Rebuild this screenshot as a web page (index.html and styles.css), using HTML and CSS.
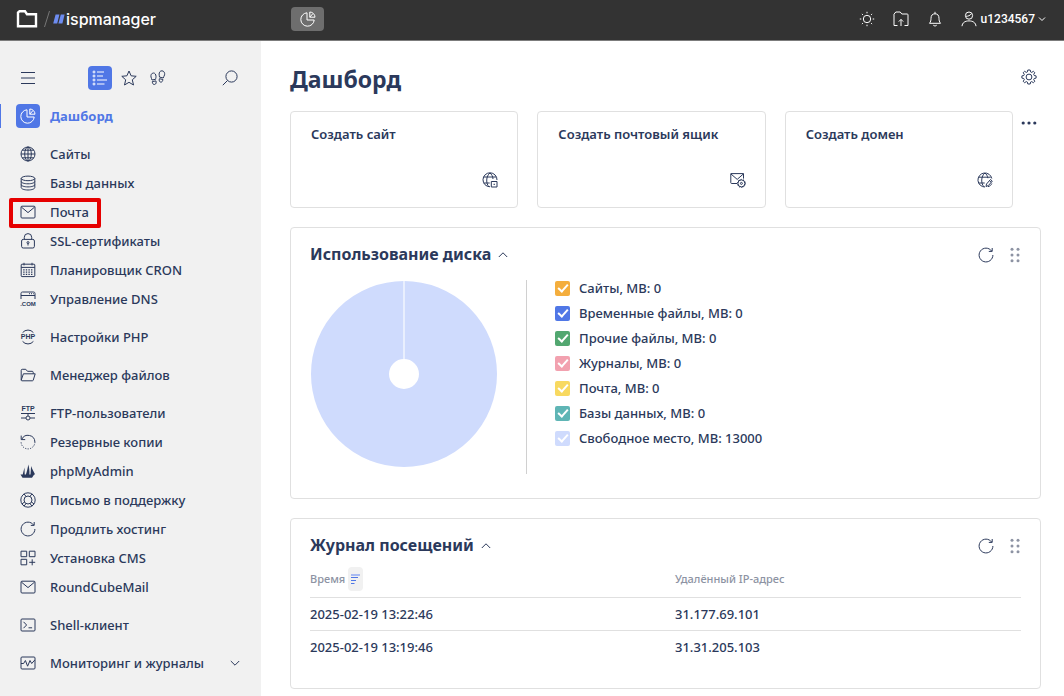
FILE: index.html
```html
<!DOCTYPE html>
<html lang="ru">
<head>
<meta charset="utf-8">
<title>Дашборд — ispmanager</title>
<meta name="viewport" content="width=device-width, initial-scale=1">
<link rel="stylesheet" href="styles.css">
</head>
<body>
<svg class="sprite" aria-hidden="true">
  <symbol id="pie" viewBox="0 0 16 16"><path d="M7 1.8A6.7 6.7 0 1 0 14.2 9H7zM9.800 1v5.200H15A5.300 5.300 0 0 0 9.800 1zM9.800 6.200l3-3.500"/></symbol>
  <symbol id="globe" viewBox="0 0 16 16"><circle cx="8" cy="8" r="7"/><ellipse cx="8" cy="8" rx="3.3" ry="7"/><path d="M1 8h14M8 1v14M2.2 4.2h11.6M2.2 11.8h11.6"/></symbol>
  <symbol id="db" viewBox="0 0 16 16"><ellipse cx="8" cy="3.4" rx="6.8" ry="2.3"/><path d="M1.2 3.4v9.2c0 1.3 3 2.4 6.8 2.4s6.8-1.1 6.8-2.4V3.4M1.2 6.5c0 1.3 3 2.3 6.8 2.3s6.8-1 6.8-2.3M1.2 9.6c0 1.3 3 2.3 6.8 2.3s6.8-1 6.8-2.3"/></symbol>
  <symbol id="mail" viewBox="0 0 16 16"><rect x="1" y="2.2" width="14" height="11.8" rx="1"/><path d="M1.3 3l6.7 5.6L14.7 3"/></symbol>
  <symbol id="lock" viewBox="0 0 16 16"><rect x="1.6" y="6.4" width="12.8" height="8.6" rx="1.6"/><path d="M4.3 6.2V4.3a3.7 3.7 0 0 1 7.4 0v1.9M8 10.5v2"/><circle cx="8" cy="9.6" r="1"/></symbol>
  <symbol id="calendar" viewBox="0 0 16 16"><rect x="1.2" y="2.2" width="13.6" height="12.4" rx=".8"/><path d="M1.2 5.4h13.6M4 .8v2.6M12 .8v2.6"/><path stroke-dasharray="1.4 1.2" stroke-width="1.3" d="M3.2 7.8h10M3.2 10.1h10M3.2 12.4h10"/></symbol>
  <symbol id="folder" viewBox="0 0 16 16"><path d="M1.200 13V3.300c0-.6.4-1 1-1h3.600l1.700 2h4.700c.6 0 1 .4 1 1v1.500M1.200 13.200l2.200-6.400h11.800l-2 6.500c-.1.300-.4.500-.8.500H2c-.5 0-.8-.2-.8-.6z"/></symbol>
  <symbol id="backup" viewBox="0 0 16 16"><path d="M1.800 5.200A6.900 6.900 0 0 1 14.900 8M1.200 1.600v4h4"/><path stroke-dasharray="1.200 1.300" d="M14.900 8A6.900 6.900 0 0 1 1.100 8"/></symbol>
  <symbol id="sails" viewBox="0 0 16 16"><path class="solid" d="M.5 11.500h2.200L4.500 4.500 4.700 11.500h1.200C7 8 8 4.500 8.200 1.500c1 3 1.500 6.500 1.200 10h1.100l.6-8.500c1 3 2.600 5.600 3.900 8.300l-1 .5-2 2.900H2.500z"/></symbol>
  <symbol id="lifebuoy" viewBox="0 0 16 16"><circle cx="8" cy="8" r="7.200"/><circle cx="8" cy="8" r="4"/><path d="M4 1.800l2 2.600M12 1.800l-2 2.600M1.900 12l2.600-2M14.100 12l-2.600-2M4 14.200l2-2.600M12 14.200l-2-2.600"/></symbol>
  <symbol id="reload" viewBox="0 0 16 16"><path d="M13.600 4A6.900 6.900 0 1 0 14.900 8M14.200 1v3.400h-3.400"/></symbol>
  <symbol id="apps" viewBox="0 0 16 16"><path d="M1 1.200h5.700v5.500H1zM9.300 1.200H15v5.500H9.300zM1 9.300h5.700v5.500H1zM12.200 9.300v6M9.200 12.300h6"/></symbol>
  <symbol id="shell" viewBox="0 0 16 16"><rect x="1" y="2" width="14" height="12" rx="1"/><path d="M3.500 4.800L6.600 8l-3.100 3.200M8.500 10.800h3.600"/></symbol>
  <symbol id="monitor" viewBox="0 0 16 16"><rect x="1" y="2" width="14" height="12" rx="1"/><path d="M1 8.500h2.600l1.800-3 2.200 5.700L10 5.500l1.700 3L14.800 5"/></symbol>
  <symbol id="chevron" viewBox="0 0 16 16"><path d="M3.800 6L8 10.200 12.200 6"/></symbol>
  <symbol id="chevron-up" viewBox="0 0 16 16"><path d="M3.800 10L8 5.800l4.200 4.200"/></symbol>
</svg>

<header class="topbar">
  <a class="logo" href="#" aria-label="ispmanager">
    <svg class="logo-folder" viewBox="0 0 22 20" aria-hidden="true"><path d="M2 3.500V17.300H20V5.200H11L9 2.300H3.500z"/></svg>
    <svg class="logo-slash" viewBox="0 0 8 20" aria-hidden="true"><path d="M1.500 18L6.500 2"/></svg>
    <svg class="logo-mark" viewBox="0 0 12 10" aria-hidden="true"><path d="M2.600.500h3.800L4.200 9.500H.200zM7.800.500h3.800L9.400 9.500h-4z"/></svg>
    <span class="logo-name">ispmanager</span>
  </a>
  <button class="tab" type="button" aria-label="Дашборд"><svg class="icon"><use href="#pie"/></svg></button>
  <div class="tools">
    <button class="tool" type="button" aria-label="Тема"><svg class="icon" viewBox="0 0 16 16"><circle cx="8" cy="8" r="3.700"/><path d="M8 .8v1.500M8 13.700v1.500M.8 8h1.500M13.700 8h1.500M2.900 2.900l1 1M12.100 12.100l1 1M2.900 13.100l1-1M12.100 3.900l1-1"/></svg></button>
    <button class="tool" type="button" aria-label="Загрузка"><svg class="icon" viewBox="0 0 16 16"><path d="M4.500 14.500H1V3.200L2.800 1h4.400l1.600 2h5.400c.5 0 .8.300.8.800v10.700h-3.500M8 15V8.500M5.800 10.600L8 8.400l2.200 2.200"/></svg></button>
    <button class="tool" type="button" aria-label="Уведомления"><svg class="icon" viewBox="0 0 16 16"><path d="M2.500 12.300h11c-1.200-1.600-1.500-2.800-1.500-5C12 4.300 10.500 2.800 8 2.800S4 4.300 4 7.300c0 2.200-.3 3.400-1.500 5zM8 2.800V.8M6.300 14.200c.8 1 2.600 1 3.400 0"/></svg></button>
    <button class="tool user" type="button"><svg class="icon" viewBox="0 0 16 16"><circle cx="8" cy="4.600" r="3.600"/><path d="M1 15.200c.3-3.500 3-5.300 7-5.300s6.700 1.800 7 5.300M5 5.200c2 .2 4-.6 5.500-2.600"/></svg><span>u1234567</span><svg class="caret" viewBox="0 0 10 10"><path d="M2 3.500l3 3 3-3"/></svg></button>
  </div>
</header>

<div class="shell">
  <aside class="sidebar">
    <div class="modes">
      <button class="mode menu" type="button" aria-label="Меню"><svg class="icon" viewBox="0 0 16 16"><path d="M1 2.500h14M1 8h14M1 13.500h14"/></svg></button>
      <button class="mode on" type="button" aria-label="Список"><svg class="icon" viewBox="0 0 16 16"><path d="M5 2h7M5 6h6M5 10h10M5 14h7.500"/><circle cx="2" cy="2" r="1"/><circle cx="2" cy="6" r="1"/><circle cx="2" cy="10" r="1"/><circle cx="2" cy="14" r="1"/></svg></button>
      <button class="mode" type="button" aria-label="Избранное"><svg class="icon" viewBox="0 0 16 16"><path d="M8 1l2.100 4.800 5.100.5-3.900 3.500 1.200 5.200L8 12.300 3.500 15l1.200-5.200L.8 6.300l5.100-.5z"/></svg></button>
      <button class="mode" type="button" aria-label="История"><svg class="icon" viewBox="0 0 16 16"><path d="M3.500 3C1.500 3 .6 5 1 7c.3 1.300.8 2 1 3l3.600-.7c0-1 .5-1.500.4-3C5.900 4.500 5 3 3.500 3zM2.300 11.600l3.600-.7c.6 1.600.2 3.300-1.300 3.600s-2.200-1.200-2.300-2.900zM12 .8c-2 0-2.800 1.600-2.900 3.300 0 1.300.4 2 .4 3l3.700.9c.3-1.200 1-1.800 1.400-3.200C15 3 14 .9 12 .8zM9.400 8.700l3.500.8c-.2 1.700-1 2.900-2.300 2.600S8.900 10.400 9.400 8.700z"/></svg></button>
      <button class="mode search" type="button" aria-label="Поиск"><svg class="icon" viewBox="0 0 16 16"><circle cx="9.500" cy="6.500" r="5.600"/><path d="M5.500 10.500L.8 15.200"/></svg></button>
    </div>
    <nav class="nav" aria-label="Разделы">
      <ul class="group">
        <li><a class="link active" href="#"><span class="cell"><svg class="icon"><use href="#pie"/></svg></span>Дашборд</a></li>
      </ul>
      <ul class="group">
        <li><a class="link" href="#"><span class="cell"><svg class="icon"><use href="#globe"/></svg></span>Сайты</a></li>
        <li><a class="link" href="#"><span class="cell"><svg class="icon"><use href="#db"/></svg></span>Базы данных</a></li>
        <li><a class="link marked" href="#"><span class="cell"><svg class="icon"><use href="#mail"/></svg></span>Почта</a></li>
        <li><a class="link" href="#"><span class="cell"><svg class="icon"><use href="#lock"/></svg></span>SSL-сертификаты</a></li>
        <li><a class="link" href="#"><span class="cell"><svg class="icon"><use href="#calendar"/></svg></span>Планировщик CRON</a></li>
        <li><a class="link" href="#"><span class="cell"><svg class="icon" viewBox="0 0 16 16"><path d="M1 8V2.600C1 1.600 1.500 1 2.500 1h11c1 0 1.500.6 1.500 1.600V8M1 4.500h14M9 2.700h1M11 2.700h1M13 2.700h.8"/><text class="glyph" x="8" y="15" font-size="6" text-anchor="middle">.COM</text></svg></span>Управление DNS</a></li>
      </ul>
      <ul class="group">
        <li><a class="link" href="#"><span class="cell"><svg class="icon" viewBox="0 0 16 16"><path d="M2.600 3.600a7 7 0 0 1 10.800 0M2.600 12.400a7 7 0 0 0 10.800 0"/><text class="glyph" x="8" y="10.400" font-size="7" text-anchor="middle">PHP</text></svg></span>Настройки PHP</a></li>
      </ul>
      <ul class="group">
        <li><a class="link" href="#"><span class="cell"><svg class="icon"><use href="#folder"/></svg></span>Менеджер файлов</a></li>
      </ul>
      <ul class="group">
        <li><a class="link" href="#"><span class="cell"><svg class="icon" viewBox="0 0 16 16"><text class="glyph" x="8" y="5.600" font-size="7" text-anchor="middle">FTP</text><path d="M1 8.500h14M8 8.500v2.400M1 13h5M10 13h5"/><circle cx="8" cy="13" r="2"/></svg></span>FTP-пользователи</a></li>
        <li><a class="link" href="#"><span class="cell"><svg class="icon"><use href="#backup"/></svg></span>Резервные копии</a></li>
        <li><a class="link" href="#"><span class="cell"><svg class="icon"><use href="#sails"/></svg></span>phpMyAdmin</a></li>
        <li><a class="link" href="#"><span class="cell"><svg class="icon"><use href="#lifebuoy"/></svg></span>Письмо в поддержку</a></li>
        <li><a class="link" href="#"><span class="cell"><svg class="icon"><use href="#reload"/></svg></span>Продлить хостинг</a></li>
        <li><a class="link" href="#"><span class="cell"><svg class="icon"><use href="#apps"/></svg></span>Установка CMS</a></li>
        <li><a class="link" href="#"><span class="cell"><svg class="icon"><use href="#mail"/></svg></span>RoundCubeMail</a></li>
      </ul>
      <ul class="group">
        <li><a class="link" href="#"><span class="cell"><svg class="icon"><use href="#shell"/></svg></span>Shell-клиент</a></li>
      </ul>
      <ul class="group">
        <li><a class="link" href="#"><span class="cell"><svg class="icon"><use href="#monitor"/></svg></span>Мониторинг и журналы<svg class="icon more"><use href="#chevron"/></svg></a></li>
      </ul>
    </nav>
  </aside>

  <main class="main">
    <div class="title-row">
      <h1>Дашборд</h1>
      <button class="plain gear" type="button" aria-label="Настройки"><svg class="icon" viewBox="0 0 16 16"><circle cx="8" cy="8" r="2.900"/><path d="M6.800 1h2.400l.4 1.900 1.100.5 1.700-1.100 1.400 1.400-1.100 1.700.5 1.100 1.900.4v2.200l-1.900.4-.5 1.100 1.100 1.700-1.400 1.400-1.700-1.100-1.100.5L9.200 15H6.800l-.4-1.900-1.100-.5-1.700 1.100-1.400-1.400 1.100-1.700-.5-1.100L.9 9.100V6.900l1.900-.4.500-1.100-1.100-1.700 1.400-1.400 1.700 1.100 1.100-.5z"/></svg></button>
    </div>

    <div class="quick">
      <div class="cards">
        <a class="card" href="#"><span>Создать сайт</span><svg class="icon" viewBox="0 0 16 16"><path d="M8 14.800A7 7 0 1 1 15 8M7 14.700C3.800 12 3.800 4 8 1c1.700 1.300 2.800 3.500 3 6M1.700 5h12.600M1.700 11h6M9.300 9.500H15V15H9.300z"/><path d="M11.500 12.300h1.500"/></svg></a>
        <a class="card" href="#"><span>Создать почтовый ящик</span><svg class="icon" viewBox="0 0 16 16"><path d="M7 11.500H1.500c-.4 0-.7-.3-.7-.7V1.600h12.700v5M1 2l6.200 5.400L13.300 2"/><circle cx="11.400" cy="11.400" r="3.500"/><circle cx="11.400" cy="11.400" r="1"/><circle cx="11.400" cy="11.400" r="4" stroke-dasharray="1.200 1.300"/></svg></a>
        <a class="card" href="#"><span>Создать домен</span><svg class="icon" viewBox="0 0 16 16"><path d="M8 15A7 7 0 1 1 14.800 6.500M7 14.700C3.800 12 3.800 4 8 1c1.500 1.200 2.500 3 2.900 5.200M1.700 5.200h12M1.700 11h6M9 14.500l.5-2.500 4-4.500 1.800 1.600-4 4.500zM12.500 8.700l1.700 1.600M11 14.700c2-.5 3.200-1.700 3.800-3.200"/></svg></a>
      </div>
      <button class="plain dots" type="button" aria-label="Ещё"><svg class="icon" viewBox="0 0 16 16"><path class="solid" d="M.6 8a1.600 1.600 0 1 0 3.200 0 1.600 1.600 0 1 0-3.200 0M6.400 8a1.600 1.600 0 1 0 3.200 0 1.600 1.600 0 1 0-3.200 0M12.200 8a1.600 1.600 0 1 0 3.200 0 1.600 1.600 0 1 0-3.200 0"/></svg></button>
    </div>

    <section class="panel">
      <div class="panel-head">
        <h2><button class="fold" type="button">Использование диска<svg class="icon"><use href="#chevron-up"/></svg></button></h2>
        <button class="plain" type="button" aria-label="Обновить"><svg class="icon"><use href="#reload"/></svg></button>
        <button class="plain grip" type="button" aria-label="Переместить"><svg class="icon" viewBox="0 0 16 16"><circle cx="5" cy="2.200" r="1.500"/><circle cx="11" cy="2.200" r="1.500"/><circle cx="5" cy="8" r="1.500"/><circle cx="11" cy="8" r="1.500"/><circle cx="5" cy="13.800" r="1.500"/><circle cx="11" cy="13.800" r="1.500"/></svg></button>
      </div>
      <div class="disk">
        <div class="chart">
          <svg class="donut" viewBox="0 0 186 186" role="img" aria-label="Свободное место"><circle cx="93" cy="93" r="54" fill="none" stroke="#cfdbfd" stroke-width="78"/><path d="M93 0v78" stroke="#e9effe" stroke-width="2"/></svg>
        </div>
        <div class="legend">
          <label class="item"><input class="check sites" type="checkbox" checked>Сайты, MB: 0</label>
          <label class="item"><input class="check temp" type="checkbox" checked>Временные файлы, MB: 0</label>
          <label class="item"><input class="check other" type="checkbox" checked>Прочие файлы, MB: 0</label>
          <label class="item"><input class="check logs" type="checkbox" checked>Журналы, MB: 0</label>
          <label class="item"><input class="check post" type="checkbox" checked>Почта, MB: 0</label>
          <label class="item"><input class="check bases" type="checkbox" checked>Базы данных, MB: 0</label>
          <label class="item"><input class="check free" type="checkbox" checked>Свободное место, MB: 13000</label>
        </div>
      </div>
    </section>

    <section class="panel visits">
      <div class="panel-head">
        <h2><button class="fold" type="button">Журнал посещений<svg class="icon"><use href="#chevron-up"/></svg></button></h2>
        <button class="plain" type="button" aria-label="Обновить"><svg class="icon"><use href="#reload"/></svg></button>
        <button class="plain grip" type="button" aria-label="Переместить"><svg class="icon" viewBox="0 0 16 16"><circle cx="5" cy="2.200" r="1.500"/><circle cx="11" cy="2.200" r="1.500"/><circle cx="5" cy="8" r="1.500"/><circle cx="11" cy="8" r="1.500"/><circle cx="5" cy="13.800" r="1.500"/><circle cx="11" cy="13.800" r="1.500"/></svg></button>
      </div>
      <table class="log">
        <thead>
          <tr><th><div class="th">Время<button class="sort" type="button" aria-label="Сортировать"><svg viewBox="0 0 11 12"><path class="pale" d="M1 2h9"/><path d="M1 4.500h7M1 7.500h5M1 10.500h3.500"/></svg></button></div></th><th>Удалённый IP-адрес</th></tr>
        </thead>
        <tbody>
          <tr><td>2025-02-19 13:22:46</td><td>31.177.69.101</td></tr>
          <tr><td>2025-02-19 13:19:46</td><td>31.31.205.103</td></tr>
        </tbody>
      </table>
    </section>
  </main>
</div>
</body>
</html>
```
FILE: styles.css
```css
*, *::before, *::after { box-sizing: border-box; }

body {
  margin: 0;
  min-height: 100vh;
  display: flex;
  flex-direction: column;
  background: #fff;
  color: #2b395b;
  font: 500 13px/20px "Noto Sans", "Open Sans", sans-serif;
}

button {
  margin: 0;
  padding: 0;
  border: 0;
  background: none;
  color: inherit;
  font: inherit;
  cursor: pointer;
}

a { color: inherit; text-decoration: none; }
ul { margin: 0; padding: 0; list-style: none; }
h1, h2 { margin: 0; }

.sprite { position: absolute; width: 0; height: 0; }

.icon {
  display: block;
  flex: none;
  width: 16px;
  height: 16px;
  fill: none;
  stroke: currentColor;
  stroke-width: 1;
}

.solid { fill: currentColor; stroke: none; }
.glyph { fill: currentColor; stroke: none; font-family: "Liberation Sans", sans-serif; font-weight: 700; }

/* Top bar */
.topbar {
  display: flex;
  align-items: center;
  height: 41px;
  padding: 0 17px 2px 16px;
  background: #333;
  border-bottom: 1px solid #7c7c7c;
  color: #fff;
}

.logo { display: flex; align-items: center; width: 275px; }
.logo-folder { width: 22px; height: 20px; fill: none; stroke: #fff; stroke-width: 2.4; }
.logo-slash { width: 8px; height: 20px; margin-left: 5px; fill: none; stroke: #777; }
.logo-mark { width: 12px; height: 10px; margin: 0 1px 0 2px; fill: #6d8cf0; }
.logo-name { font: 500 16px/20px Inter, sans-serif; }

.tab {
  display: grid;
  place-items: center;
  width: 33px;
  height: 24px;
  border-radius: 4px;
  background: #6e6e6e;
}

.tools { display: flex; align-items: center; gap: 18px; margin-left: auto; }
.tool { display: flex; align-items: center; }
.user { gap: 4px; font: 500 12px/16px Roboto, "Liberation Sans", sans-serif; }
.caret { width: 10px; height: 10px; margin-left: -2px; fill: none; stroke: currentColor; }

/* Sidebar */
.shell { flex: 1; display: flex; }

.sidebar {
  flex: none;
  width: 261px;
  padding: 25px 0 17px;
  background: #f1f1f1;
}

.modes { display: flex; align-items: center; gap: 5px; padding: 0 19px 0 16px; }
.mode { display: grid; place-items: center; width: 24px; height: 24px; border-radius: 4px; }
.mode.menu { margin-right: 43px; }
.mode.search { margin-left: auto; }
.mode.on { background: #5077e6; color: #fff; }

.nav { display: flex; flex-direction: column; gap: 9px; padding-top: 12px; }

.link {
  position: relative;
  display: flex;
  align-items: center;
  gap: 10px;
  height: 29px;
  padding: 0 18px 1px 16px;
}

.cell { display: grid; place-items: center; width: 24px; height: 24px; border-radius: 4px; }
.more { margin-left: auto; }

.active { color: #5077e6; font-weight: 700; }
.active .cell { background: #5077e6; color: #fff; }
.active::before {
  content: "";
  position: absolute;
  left: 0;
  top: 2px;
  bottom: 3px;
  width: 1px;
  background: #5077e6;
}

.marked::after {
  content: "";
  position: absolute;
  left: 9px;
  top: 0;
  width: 92px;
  height: 30px;
  border: 4px solid #e60000;
  border-radius: 2px;
}

/* Main column */
.main {
  flex: 1;
  min-width: 0;
  display: flex;
  flex-direction: column;
  padding: 20px 23px 7px 29px;
}

.plain { display: flex; align-items: center; justify-content: center; }

.title-row {
  display: flex;
  justify-content: space-between;
  margin-bottom: 14px;
  padding-right: 4px;
}

h1 { font-size: 23px; line-height: 36px; font-weight: 700; }
.gear { height: 32px; }

.quick { display: flex; margin-bottom: 19px; }
.cards { flex: 1; display: grid; grid-template-columns: repeat(3, 1fr); gap: 19px; }

.card {
  display: flex;
  flex-direction: column;
  justify-content: space-between;
  height: 97px;
  padding: 12px 19px 19px 20px;
  border: 1px solid #e0e0e0;
  border-radius: 4px;
  font-weight: 600;
}

.card .icon { align-self: flex-end; }

.dots { align-self: flex-start; width: 28px; height: 24px; padding-left: 4px; }

.panel {
  padding: 16px 19px 24px;
  border: 1px solid #e0e0e0;
  border-radius: 4px;
}

.panel + .panel { margin-top: 19px; }

.panel-head { display: flex; align-items: center; gap: 13px; height: 21px; }
.panel-head h2 { flex: 1; font-size: 16px; line-height: 21px; font-weight: 700; }
.panel-head .grip { margin-right: -2px; }
.fold { display: flex; align-items: center; gap: 4px; }
.grip .icon { fill: #8d93a3; stroke: none; }

.disk { display: flex; margin-top: 15px; }
.chart { width: 217px; height: 194px; padding-top: 1px; border-right: 1px solid #d0d0d0; }
.donut { display: block; width: 186px; height: 186px; margin-left: 1px; }
.legend { display: flex; flex-direction: column; gap: 5px; margin: -2px 0 0 28px; }
.item { display: flex; align-items: center; gap: 9px; }

.check {
  appearance: none;
  display: grid;
  place-items: center;
  width: 15px;
  height: 15px;
  margin: 0;
  border-radius: 2px;
}

.check:checked::before {
  content: "";
  width: 10px;
  height: 6px;
  margin-bottom: 3px;
  border: solid #fff;
  border-width: 0 0 2px 2px;
  transform: rotate(-48deg);
}

.sites { background: #f4ae3d; }
.temp { background: #5077e6; }
.other { background: #52a770; }
.logs { background: #f2a1af; }
.post { background: #f8d960; }
.bases { background: #5fb5b5; }
.free { background: #cfdbfd; }

/* Visit log */
.visits { flex: 1; }
.log { width: 100%; table-layout: fixed; margin-top: 6px; border-collapse: collapse; }
.log th, .log td { padding: 0; text-align: left; height: 33px; }
.log th { height: 35px; color: #8d93a3; font-size: 11px; line-height: 24px; font-weight: 500; }
.log th:first-child { width: 365px; }
.log tr { border-bottom: 1px solid #e0e0e0; }
.log tbody tr:last-child { border-bottom: 0; }
.th { display: flex; align-items: center; gap: 3px; }
.sort { display: grid; place-items: center; width: 15px; height: 24px; border-radius: 4px; background: #f1f1f1; }
.sort svg { width: 11px; height: 12px; fill: none; stroke: #5077e6; stroke-width: 1; }
.sort .pale { stroke: #a9bbf2; stroke-width: 2; }
```
